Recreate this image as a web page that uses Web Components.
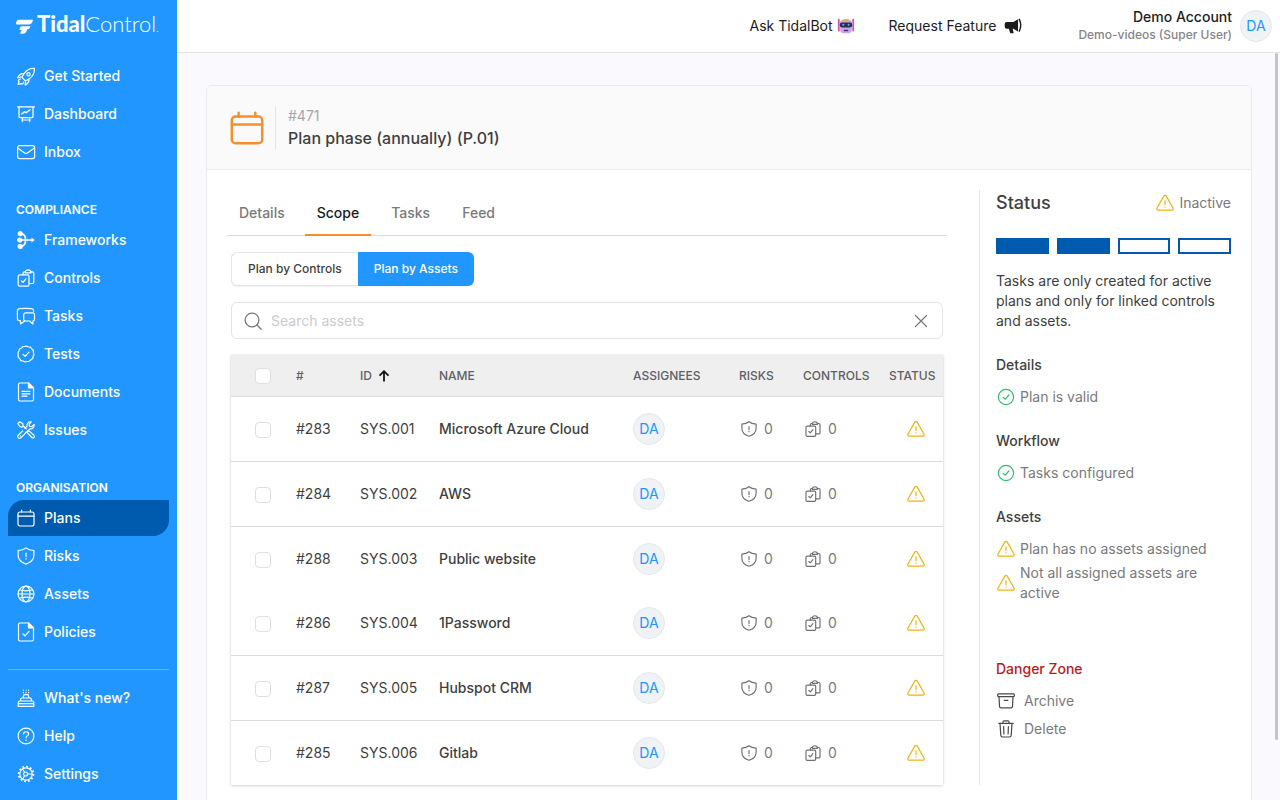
<!DOCTYPE html>
<html lang="en">
<head>
<meta charset="utf-8">
<meta name="viewport" content="width=device-width, initial-scale=1">
<title>TidalControl – Plan phase (annually)</title>
<style>
:root{
  --brand:#2196ff; --brand-dark:#005aad; --accent:#f68e2c; --ink:#3f3f42; --ink-strong:#1c1c1e; --muted:#7a7a7c;
  --line:#e4e4e7; --warn:#f0b310; --ok:#2dbe6c; --danger:#b91c1c;
}
html,body{margin:0;height:100%}
body{font:400 14px/20px Inter,"Liberation Sans",sans-serif;color:var(--ink)}
</style>
</head>
<body>
<td-shell>
  <td-sidebar slot="side">
    <td-nav-item icon="rocket">Get Started</td-nav-item>
    <td-nav-item icon="board">Dashboard</td-nav-item>
    <td-nav-item icon="mail">Inbox</td-nav-item>
    <td-nav-heading>COMPLIANCE</td-nav-heading>
    <td-nav-item icon="branch">Frameworks</td-nav-item>
    <td-nav-item icon="clipboard">Controls</td-nav-item>
    <td-nav-item icon="chat">Tasks</td-nav-item>
    <td-nav-item icon="badge">Tests</td-nav-item>
    <td-nav-item icon="doc">Documents</td-nav-item>
    <td-nav-item icon="tools">Issues</td-nav-item>
    <td-nav-heading>ORGANISATION</td-nav-heading>
    <td-nav-item icon="calendar" active>Plans</td-nav-item>
    <td-nav-item icon="shield">Risks</td-nav-item>
    <td-nav-item icon="globe">Assets</td-nav-item>
    <td-nav-item icon="policy">Policies</td-nav-item>
    <td-nav-item slot="foot" icon="cake">What's new?</td-nav-item>
    <td-nav-item slot="foot" icon="help">Help</td-nav-item>
    <td-nav-item slot="foot" icon="gear">Settings</td-nav-item>
  </td-sidebar>
  <td-topbar slot="top"></td-topbar>
  <td-plan-card>
    <td-tabs></td-tabs>
    <td-scope-switch></td-scope-switch>
    <td-search></td-search>
    <td-asset-table></td-asset-table>
    <td-status-panel slot="aside"></td-status-panel>
  </td-plan-card>
</td-shell>

<script>
// Icons share a 20x20 grid and are stroked with the current colour.
const ICONS = {
  rocket:'<path d="M18.400 2.400c-4-.2-7.800 1.300-10.600 5.600l-1.900 3.400 3.600 3.600 3.400-1.900c4.300-2.800 5.700-6.700 5.500-10.700z"/><circle cx="12.500" cy="8.200" r="1.600"/><path d="M8 7.700c-3-.4-5 1.200-6.400 3.900l3.300-.4M13 13c.4 2.800-1.200 4.600-3.800 6l.3-3.200M4.400 13c-1.500 0-2.100 1-1.900 2.300M3 15.400l-.9 3 2.900-.8M7.600 16c0 1.600-1 2.300-2.600 1.700"/>',
  board:'<path d="M1.500 2.800h17M3 2.800v9.800a1 1 0 0 0 1 1h12a1 1 0 0 0 1-1V2.800M6.400 13.600v4M13.600 13.600v4M5.600 16h8.800"/><path stroke-width="1.400" d="M5.800 10l2.800-2.400 1.500 1.200L14 5.800"/>',
  mail:'<rect x="1.600" y="3.600" width="17" height="13" rx="2"/><path d="M2 6.200l6.600 4.800c.9.600 1.900.6 2.800 0L18 6.200"/>',
  branch:'<g fill="currentColor"><circle cx="4.200" cy="3.600" r="2"/><circle cx="3.600" cy="10" r="2"/><circle cx="4.200" cy="16.400" r="2"/><path d="M15.500 7.500l3.300 2.500-3.300 2.500z" stroke="none"/></g><path stroke-width="1.700" d="M3.600 10h13.500M5 3.800c3.300 0 4.600 3 4.600 6.200S8.300 16.200 5 16.200"/>',
  clipboard:'<rect x="2.200" y="6.800" width="10.800" height="11.400" rx="1.400"/><path d="M7 6.800V5.200A1.400 1.400 0 0 1 8.400 3.900h.8M15 3.900h1.400a1.400 1.400 0 0 1 1.400 1.400v8.800a1.400 1.400 0 0 1-1.400 1.400H13M9.200 4.800c0-1.800 1.200-2.900 2.900-2.900s2.900 1.100 2.900 2.900z"/><path d="M5.400 12.800l1.600 1.600 2.900-3.600"/>',
  chat:'<path d="M4.500 15.500v2.600l4.200-3M4.500 14.700H3.400a2 2 0 0 1-2-2V4.500c.1-1.200.9-1.800 2-1.900 4-.4 8.200-.4 12.200 0 1.100.1 1.800.7 2 1.900v1"/><path d="M9.500 6.800h7.200a1.800 1.800 0 0 1 1.800 1.800v4.600a1.800 1.800 0 0 1-1.600 1.800v3l-3.300-3H9.500a1.800 1.800 0 0 1-1.800-1.800V8.600a1.800 1.800 0 0 1 1.800-1.800z"/>',
  badge:'<path d="M10 2l2.200.8 2.200.2 1.200 1.800 1.700 1.500.1 2.300.6 1.800-.9 2.200-.5 2-1.900 1.300-1.700 1.500-2.200.1-1.900.4-2.100-.9-1.900-.4-1.300-1.900-1.400-1.600-.1-2.300L2 9l.9-2.100L3.600 5l1.900-1.100L7.200 2.500l2.200-.2z"/><path d="M7 10.400l2.100 2 3.900-4.300"/>',
  doc:'<path d="M12.500 1H4a1.500 1.500 0 0 0-1.500 1.500v15A1.500 1.500 0 0 0 4 19h12a1.500 1.500 0 0 0 1.500-1.500V6z"/><path fill="currentColor" d="M12.500 1v5h5z"/><path d="M6 9.400h8M6 11.800h8M6 14.200h5"/>',
  policy:'<path d="M12.500 1H4a1.500 1.500 0 0 0-1.500 1.500v15A1.500 1.500 0 0 0 4 19h12a1.500 1.500 0 0 0 1.500-1.500V6z"/><path fill="currentColor" d="M12.500 1v5h5z"/><path d="M7 12l2 1.800 4-4.400"/>',
  tools:'<path d="M1.800 3.600l1.900-1.800 3.100 2 .3 2 3.200 3.100M11.300 12.700l4.500 4.800c1.500 1.300 3.400-.6 2.200-2.100l-4.700-4.300-2.200.2-1.700 1.700M7 6.500l-1.100.8-2-.8-2.100-2.900"/><path d="M9 8.400l2.100-2.200c-.5-2.600 1.400-4.800 4.200-4.400l-2.100 2.400.4 2.100 2.200.3 2.300-2.200c.6 2.800-1.700 4.900-4.300 4.400l-9 9c-1.700 1.500-4-.6-2.700-2.500l4.600-4.400M4.400 15.800l.2.200"/>',
  calendar:'<rect x="2" y="4" width="16" height="14" rx="2"/><path d="M2 8.200h16M5.600 2v2M14.400 2v2"/>',
  shield:'<path d="M10 1.900C7.800 3.800 5 4.400 2.100 4.500v4.600c0 4.500 3.200 7.500 7.900 9 4.700-1.500 7.900-4.500 7.900-9V4.500C15 4.400 12.200 3.800 10 1.900z"/><path d="M10 7.200v3.400M10 12.700v.4"/>',
  globe:'<circle cx="10" cy="10" r="7.900"/><ellipse cx="10" cy="10" rx="4" ry="7.900"/><path d="M3.400 5.800c4.200 1.400 9 1.400 13.200 0M3.400 14.200c4.200-1.400 9-1.400 13.200 0M2.100 10h15.800"/>',
  cake:'<path d="M2.200 18.400h15.600v-4a1.400 1.400 0 0 0-1.400-1.400H3.600a1.400 1.400 0 0 0-1.400 1.400zM2.200 15.600h15.600M4.600 13v-1.600a1.400 1.400 0 0 1 1.400-1.400h8a1.400 1.400 0 0 1 1.400 1.400V13M7 9.800l1-3.200h4l1 3.200M7.400 4.400v.4M10 4.400v.4M12.600 4.400v.4M7.400 2v.2M10 2v.2M12.600 2v.2"/>',
  help:'<circle cx="10" cy="10" r="7.900"/><path d="M7.600 8c0-3 5-3 5 0 0 1.800-2.600 1.900-2.600 3.800M10 14v.4"/>',
  gear:'<circle cx="10" cy="10" r="6.200"/><circle cx="10" cy="10" r="7.400" stroke-width="1.700" stroke-linecap="butt" stroke-dasharray="1.800 2.070"/><circle cx="9.600" cy="10" r="2"/><path d="M11.600 10h4.600M8.600 8.300L6.400 4.800M8.600 11.700l-2.200 3.500"/>',
  warn:'<path d="M8.900 2.900a1.300 1.300 0 0 1 2.200 0l7 12.300a1.300 1.300 0 0 1-1.100 1.900H3a1.300 1.300 0 0 1-1.100-1.900z"/><path d="M10 7.800v3.800M10 13.800v.3"/>',
  ok:'<circle cx="10" cy="10" r="7.600"/><path d="M7.200 10.400l2 1.800 3.600-4.200"/>',
  search:'<circle cx="9" cy="9" r="6.900"/><path d="M14 14l4.200 4.200"/>',
  close:'<path d="M4.500 4.500l11 11M15.500 4.500l-11 11"/>',
  up:'<path stroke-width="2.200" stroke-linecap="butt" stroke-linejoin="miter" d="M10 17V4.500M4.400 9.600L10 4l5.600 5.600"/>',
  archive:'<rect x="1.600" y="2.800" width="16.800" height="2.800" rx="1"/><path d="M3 5.600l.5 9.800a1.600 1.600 0 0 0 1.600 1.500h9.800a1.600 1.600 0 0 0 1.600-1.500l.5-9.800M8.200 9.400h3.600"/>',
  trash:'<path d="M2.800 4.400h14.400M4 4.400l.8 12a1.800 1.800 0 0 0 1.800 1.600h6.800a1.800 1.800 0 0 0 1.800-1.600l.8-12M7 4.400V2.800a1 1 0 0 1 1-1h4a1 1 0 0 1 1 1v1.600M7.600 7.500l.3 7.500M12.400 7.500l-.3 7.500"/>',
  horn:'<g fill="currentColor" stroke="none"><path d="M3 5.500h7.400L15.600 2.400v13.800l-5.200-3.200H9.600l1.200 5H7L5.400 13H3A2.200 2.200 0 0 1 .8 10.800V7.700A2.200 2.200 0 0 1 3 5.500z"/></g><path stroke-width="1.600" d="M17 2.600c2 4.200 2 9 0 13.200"/>',
  bot:'<g stroke="none"><rect x="1" y="2" width="2" height="14" rx="1" fill="#e0519c"/><rect x="17" y="2" width="2" height="14" rx="1" fill="#e0519c"/><path fill="#c9a6ee" d="M3 6.500C3.500 3.800 6 2.500 10 2.500s6.500 1.300 7 4l-.6 8.700c-.3 1.800-1.600 2.800-3.200 2.800H6.800C5.200 18 3.900 17 3.600 15.200z"/><path fill="#f3a65a" d="M6 3.600C7 1.600 13 1.600 14 3.600V5H6z"/><rect x="3" y="6" width="14" height="5.600" rx="2.600" fill="#26304f"/><rect x="5.800" y="7.600" width="2.400" height="2.200" rx="1.100" fill="#5db4f5"/><rect x="11.800" y="7.600" width="2.400" height="2.200" rx="1.100" fill="#5db4f5"/><rect x="7.400" y="14.200" width="5.200" height="1.500" rx=".7" fill="#4b3470"/></g>'
};

class Base extends HTMLElement {
  connectedCallback(){
    if (this.shadowRoot) return;
    const t = document.createElement('template');
    t.innerHTML = `<style>:host,*{box-sizing:border-box}${this.constructor.css || ''}</style>${this.view()}`;
    this.attachShadow({mode:'open'}).append(t.content.cloneNode(true));
  }
}

class TdIcon extends Base {
  static css = ':host{display:block;flex:none;width:20px;height:20px}svg{display:block;width:100%;height:100%}';
  view(){
    const w = this.getAttribute('weight') || '1.2';
    return `<svg viewBox="0 0 20 20" aria-hidden="true" fill="none" stroke="currentColor" stroke-width="${w}" stroke-linecap="round" stroke-linejoin="round">${ICONS[this.getAttribute('name')]}</svg>`;
  }
}

class TdShell extends Base {
  static css = `
    :host{display:grid;grid-template-columns:177px minmax(0,1fr);grid-template-rows:auto minmax(0,1fr);height:100vh;overflow:hidden;background:#f9f9fe}
    .side{grid-row:1/3;background:var(--brand);min-height:0}
    .body{position:relative;min-height:0}
    main{height:100%;overflow-y:auto;scrollbar-width:none;padding:32px 28px 32px 29px}
    .thumb{position:absolute;top:0;right:2px;width:3px;height:92%;border-radius:2px;background:#c4c4c8}`;
  view(){ return `<div class="side"><slot name="side"></slot></div><slot name="top"></slot>
    <div class="body"><main><slot></slot></main><div class="thumb" aria-hidden="true"></div></div>`; }
}

class TdLogo extends Base {
  static css = `
    :host{display:block}
    a{display:flex;align-items:center;gap:4px;height:20px;color:#fff;text-decoration:none;font:300 22px/20px Lato,Inter,sans-serif;white-space:nowrap}
    b{font-weight:900}
    small{font-size:12px}
    svg{width:17px;height:15px;flex:none}`;
  view(){ return `<a href="#home" aria-label="TidalControl home"><svg viewBox="0 0 17 15" fill="#fff" aria-hidden="true"><path d="M2.600 0.800H17c-.4 3-1.900 4.800-4.400 4.800H1C.4 5.600 0 5.300.1 4.600.3 2.400 1 .8 2.600.8z"/><path d="M5.400 7.200h9c-.3 2-1.500 3.200-3.400 3.400-.3 2.700-1.700 4.200-4.200 4.200H4.200c.3-1.600.7-3 1.700-3.800H3.600c.1-2.200.6-3.400 1.800-3.800z"/></svg><span><b>Tidal</b>Control<small>.</small></span></a>`; }
}

class TdSidebar extends Base {
  static css = `
    :host{display:flex;flex-direction:column;height:100%;padding:16px 8px 8px;color:#fff}
    td-logo{padding:0 8px;margin-bottom:22px}
    nav{display:flex;flex-direction:column;gap:2px}
    .foot{border-top:1px solid #5fb3ff;margin-top:19px;padding-top:10px}`;
  view(){ return `<td-logo></td-logo><nav aria-label="Main"><slot></slot></nav><nav class="foot" aria-label="Support"><slot name="foot"></slot></nav>`; }
}

class TdNavHeading extends Base {
  static css = ':host{display:block;padding:28px 8px 0;font:600 12px/20px Inter,sans-serif}';
  view(){ return '<slot></slot>'; }
}

class TdNavItem extends Base {
  static css = `
    :host{display:block}
    a{display:flex;align-items:center;gap:8px;height:36px;padding:0 8px;color:#fff;text-decoration:none;font-weight:500;border-radius:16px 0}
    :host([active]) a{background:var(--brand-dark)}`;
  view(){ return `<a href="#${this.getAttribute('icon')}"${this.hasAttribute('active') ? ' aria-current="page"' : ''}><td-icon name="${this.getAttribute('icon')}"></td-icon><span><slot></slot></span></a>`; }
}

class TdAvatar extends Base {
  static css = ':host{display:flex;align-items:center;justify-content:center;flex:none;width:32px;height:32px;border-radius:50%;border:1px solid #e3e8ec;background:#f0f3f6;color:var(--brand)}';
  view(){ return '<slot></slot>'; }
}

class TdTopbar extends Base {
  static css = `
    :host{display:flex;align-items:center;justify-content:flex-end;height:53px;padding:0 8px;background:#fff;border-bottom:1px solid var(--line);color:var(--ink-strong)}
    button{display:flex;align-items:center;gap:4px;border:0;background:none;padding:0;font:inherit;color:inherit;cursor:pointer}
    .bot{margin-right:34px}
    .feature{gap:8px;margin-right:56px}
    button td-icon{width:18px;height:18px}
    .who{text-align:right;margin-right:8px;line-height:18px}
    .who strong{display:block;font-weight:500}
    .who span{display:block;font-size:12px;line-height:18px;font-weight:500;color:#858588}`;
  view(){ return `<button class="bot" type="button">Ask TidalBot <td-icon name="bot"></td-icon></button>
    <button class="feature" type="button">Request Feature <td-icon name="horn"></td-icon></button>
    <div class="who"><strong>Demo Account</strong><span>Demo-videos (Super User)</span></div><td-avatar>DA</td-avatar>`; }
}

class TdPlanCard extends Base {
  static css = `
    :host{display:block;background:#fff;border:1px solid #ebebef;border-radius:6px;overflow:hidden}
    header{display:flex;align-items:center;height:84px;padding:0 21px;background:#fafafa;border-bottom:1px solid #ebebef}
    header td-icon{width:38px;height:38px;color:var(--accent)}
    .title{margin-left:9px;padding-left:12px;border-left:1px solid var(--line)}
    .title p{margin:0;line-height:20px;color:#a6a6a8}
    h1{margin:0;font:500 16px/24px Inter,sans-serif;color:var(--ink)}
    .cols{display:grid;grid-template-columns:minmax(0,1fr) 252px;gap:32px;padding:20px 20px 48px}`;
  view(){ return `<header><td-icon name="calendar" weight="1.3"></td-icon><div class="title"><p>#471</p><h1>Plan phase (annually) (P.01)</h1></div></header>
    <div class="cols"><section><slot></slot></section><slot name="aside"></slot></div>`; }
}

class TdTabs extends Base {
  static css = `
    :host{display:flex;gap:8px;height:46px;border-bottom:1px solid #dcdce0;margin-bottom:16px}
    button{height:46px;padding:2px 12px 0;border:0;border-bottom:2px solid transparent;background:none;font:500 14px/20px Inter,sans-serif;color:var(--muted);cursor:pointer}
    button[aria-selected=true]{color:var(--ink-strong);border-color:var(--accent)}`;
  view(){ this.setAttribute('role','tablist');
    return ['Details','Scope','Tasks','Feed'].map(t => `<button type="button" role="tab" aria-selected="${t==='Scope'}">${t}</button>`).join(''); }
}

class TdScopeSwitch extends Base {
  static css = `
    :host{display:flex;margin:0 4px 16px}
    button{height:34px;padding:0 16px;border:0;background:#fff;font:500 12px/16px Inter,sans-serif;color:var(--ink);box-shadow:0 1px 2px #0000000f;cursor:pointer}
    .start{border:1px solid var(--line);border-right:0;border-radius:6px 0 0 6px}
    .end{border-radius:0 6px 6px 0;background:var(--brand);color:#fff}`;
  view(){ return '<button class="start" type="button" aria-pressed="false">Plan by Controls</button><button class="end" type="button" aria-pressed="true">Plan by Assets</button>'; }
}

class TdSearch extends Base {
  static css = `
    :host{display:flex;align-items:center;height:37px;margin:0 4px 16px;padding:0 11px;border:1px solid var(--line);border-radius:6px;background:#fff;color:#77777a}
    label{display:flex}
    input{flex:1;min-width:0;border:0;outline:0;background:none;padding:0 8px;font:inherit;color:var(--ink)}
    input::placeholder{color:#cbcbce;opacity:1}
    button{display:flex;border:0;padding:0;background:none;color:inherit;cursor:pointer}`;
  view(){ return `<label for="q" aria-label="Search assets"><td-icon name="search" weight="1.3"></td-icon></label>
    <input id="q" type="text" placeholder="Search assets"><button type="button" aria-label="Clear"><td-icon name="close"></td-icon></button>`; }
}

class TdAssetTable extends Base {
  static css = `
    :host{display:block;margin:0 4px;box-shadow:0 0 2px #0000001a,0 1px 3px #00000026}
    table{width:100%;table-layout:fixed;border-collapse:separate;border-spacing:0;background:#fff}
    th,td{padding:0 0 0 16px;text-align:left;vertical-align:middle;border-bottom:1px solid #dcdcdf;white-space:nowrap}
    th{height:42px;background:#efefef;font-size:12px;font-weight:500;color:#606064}
    td{height:65px}
    tr.open td{height:64px;border-bottom:0}
    tbody tr:last-child td{height:64px;border-bottom:0}
    th:first-child,td:first-child{padding-left:24px}
    td:last-child td-icon{margin:0 auto;color:var(--warn)}
    .name{font-weight:500}
    .sort{display:flex;align-items:center;gap:4px}
    .sort td-icon{width:16px;height:16px;color:#111}
    .count{display:flex;align-items:center;gap:6px;padding-left:1px;color:var(--muted)}
    .count td-icon{width:18px;height:18px;color:#707073}
    .c-check{width:49px}.c-num{width:64px}.c-id{width:79px}.c-who{width:106px}.c-risk{width:64px}.c-ctl{width:86px}.c-stat{width:70px}
    input{appearance:none;display:block;width:16px;height:16px;margin:1px 0 0;border:1px solid #dfdfe2;border-radius:4px;background:#fff}`;
  view(){
    const rows = [[283,'Microsoft Azure Cloud'],[284,'AWS'],[288,'Public website'],[286,'1Password'],[287,'Hubspot CRM'],[285,'Gitlab']];
    return `<table><colgroup><col class="c-check"><col class="c-num"><col class="c-id"><col><col class="c-who"><col class="c-risk"><col class="c-ctl"><col class="c-stat"></colgroup>
      <thead><tr><th><input type="checkbox" aria-label="Select all assets"></th><th>#</th><th aria-sort="ascending"><span class="sort">ID <td-icon name="up"></td-icon></span></th><th>NAME</th><th>ASSIGNEES</th><th>RISKS</th><th>CONTROLS</th><th>STATUS</th></tr></thead>
      <tbody>${rows.map(([n,name],i) => `<tr${i===2?' class="open"':''}><td><input type="checkbox" aria-label="Select ${name}"></td><td>#${n}</td><td>SYS.00${i+1}</td><td class="name">${name}</td><td><td-avatar>DA</td-avatar></td>
        <td><span class="count"><td-icon name="shield" weight="1.3"></td-icon>0</span></td><td><span class="count"><td-icon name="clipboard" weight="1.3"></td-icon>0</span></td><td><td-icon name="warn"></td-icon></td></tr>`).join('')}</tbody></table>`;
  }
}

class TdNote extends Base {
  static css = `
    :host{display:flex;align-items:center;gap:4px;color:var(--muted)}
    :host([kind=ok]) td-icon{color:var(--ok)}
    :host([kind=warn]) td-icon{color:var(--warn)}`;
  view(){ return `<td-icon name="${this.getAttribute('kind')}"></td-icon><span><slot></slot></span>`; }
}

class TdProgress extends Base {
  static css = `
    :host{display:grid;grid-template-columns:repeat(4,1fr);gap:8px;height:16px}
    i{border:2px solid var(--brand-dark)}
    i.on{background:var(--brand-dark)}`;
  view(){ return [1,2,3,4].map(n => `<i${n <= +this.getAttribute('value') ? ' class="on"' : ''}></i>`).join(''); }
}

class TdStatusPanel extends Base {
  static css = `
    :host{display:block;border-left:1px solid var(--line);padding-left:16px}
    .top{display:flex;align-items:center;justify-content:space-between;height:26px;margin-bottom:22px}
    h2{margin:0;font:500 18px/24px Inter,sans-serif}
    p{margin:17px 0 24px}
    h3{margin:0 0 8px;font:500 14px/20px Inter,sans-serif}
    section{display:grid;gap:4px;margin-bottom:24px}
    .danger{margin-top:56px;gap:8px}
    .danger h3{color:var(--danger);margin-bottom:4px}
    button{display:flex;align-items:center;gap:8px;border:0;padding:0;background:none;font:inherit;color:var(--muted);cursor:pointer}
    button td-icon{color:#4a4a4d}`;
  view(){ return `<div class="top"><h2>Status</h2><td-note kind="warn">Inactive</td-note></div>
    <td-progress value="2" role="img" aria-label="2 of 4 steps done"></td-progress>
    <p>Tasks are only created for active plans and only for linked controls and assets.</p>
    <section><h3>Details</h3><td-note kind="ok">Plan is valid</td-note></section>
    <section><h3>Workflow</h3><td-note kind="ok">Tasks configured</td-note></section>
    <section><h3>Assets</h3><td-note kind="warn">Plan has no assets assigned</td-note><td-note kind="warn">Not all assigned assets are active</td-note></section>
    <section class="danger"><h3>Danger Zone</h3><button type="button"><td-icon name="archive"></td-icon>Archive</button><button type="button"><td-icon name="trash"></td-icon>Delete</button></section>`; }
}

Object.entries({'td-icon':TdIcon,'td-shell':TdShell,'td-logo':TdLogo,'td-sidebar':TdSidebar,'td-nav-heading':TdNavHeading,'td-nav-item':TdNavItem,
  'td-avatar':TdAvatar,'td-topbar':TdTopbar,'td-plan-card':TdPlanCard,'td-tabs':TdTabs,'td-scope-switch':TdScopeSwitch,'td-search':TdSearch,
  'td-asset-table':TdAssetTable,'td-note':TdNote,'td-progress':TdProgress,'td-status-panel':TdStatusPanel
}).forEach(([name, cls]) => customElements.define(name, cls));
</script>
</body>
</html>
